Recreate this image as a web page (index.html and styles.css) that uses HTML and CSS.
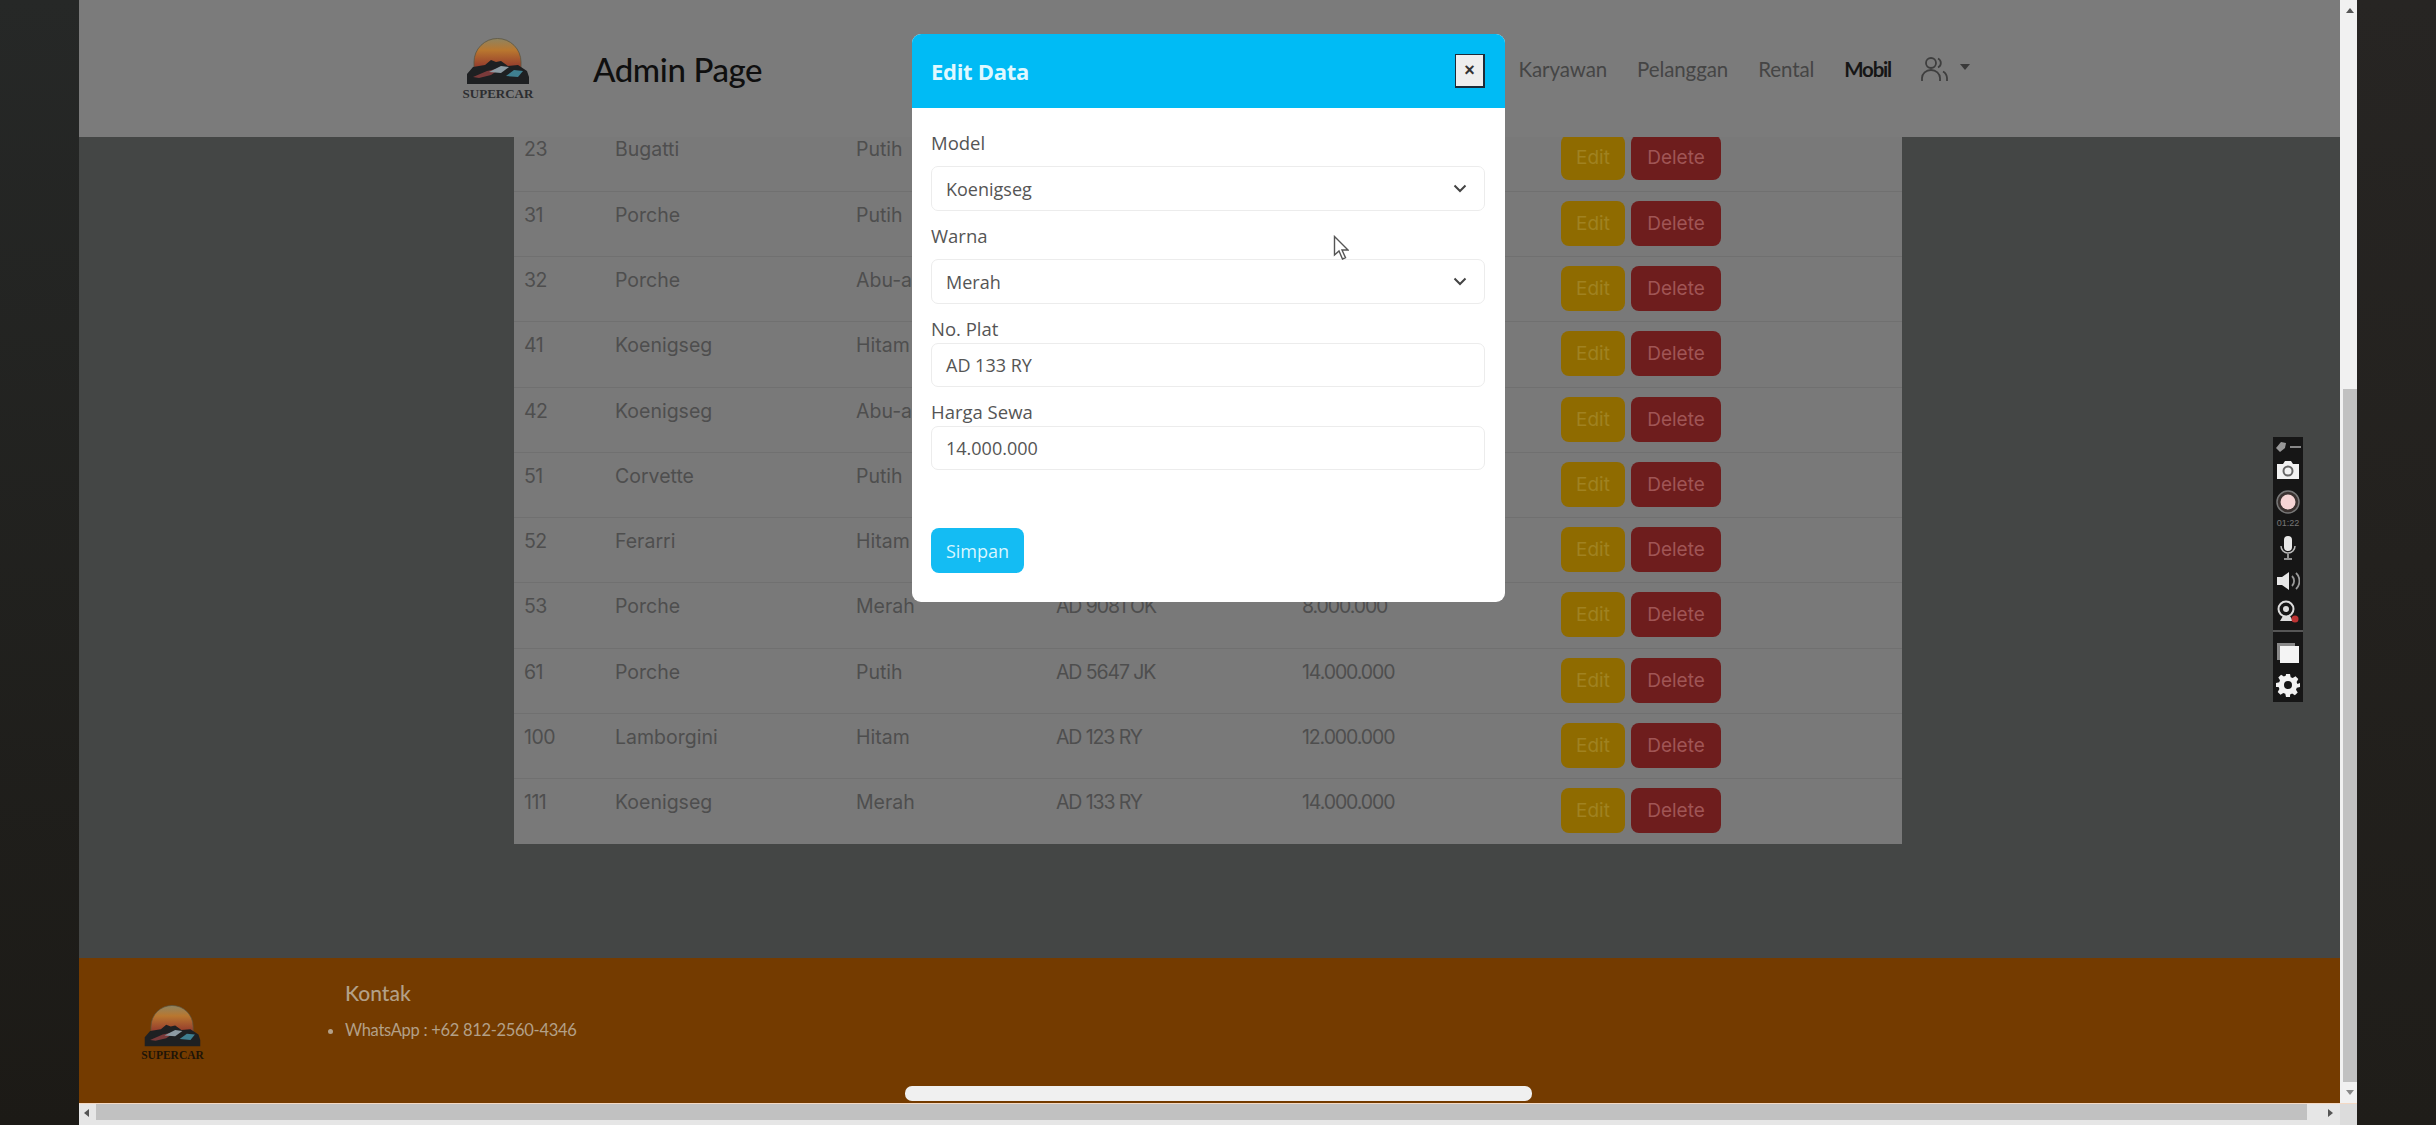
FILE: index.html
```html
<!DOCTYPE html>
<html lang="en">
<head>
  <meta charset="UTF-8" />
  <title>Admin Page</title>
  <link rel="stylesheet" href="styles.css">
</head>
<body>

<svg class="defs" width="0" height="0">
  <defs>
    <linearGradient id="sun" x1="0" y1="0" x2="0" y2="1">
      <stop offset="0" stop-color="#8f8460" />
      <stop offset="0.35" stop-color="#b9772f" />
      <stop offset="1" stop-color="#8a2a2c" />
    </linearGradient>
    <symbol id="logo-art" viewBox="0 0 70 48">
      <path d="M11 34V24a23.500 23.500 0 0 1 47 0v10z" fill="url(#sun)" stroke="#5c5540" stroke-width="0.8" />
      <path d="M4 46V36l6-7 12-2 6-5 5 2 5-1 7 5 10-1 9 6 2 6v7z" fill="#1e2022" />
      <path d="M10 39l14-6 14-3-10 7-12 3z" fill="#7a3a3a" />
      <path d="M26 34l12-6 8 1-8 6z" fill="#8d9ba3" />
      <path d="M43 38l8-6 9 1-5 6z" fill="#3f7f90" />
    </symbol>
  </defs>
</svg>

<div class="frame">
  <div class="side side-left"></div>

  <div class="browser">
    <div class="browser-top">
      <div class="page">
        <!-- Navbar -->
        <header class="navbar">
          <div class="brand">
            <svg class="brand-art"><use href="#logo-art" /></svg>
            <span class="brand-name">SUPERCAR</span>
          </div>
          <h1 class="page-title">Admin Page</h1>
          <nav class="nav-links">
            <a>Karyawan</a>
            <a>Pelanggan</a>
            <a>Rental</a>
            <a class="active">Mobil</a>
            <span class="user-menu">
              <svg width="27" height="26" viewBox="0 0 27 26" fill="none" stroke="#3e3e3e" stroke-width="1.800">
                <circle cx="10" cy="7" r="5" />
                <path d="M1 25v-3a9 8 0 0 1 18 0v3" />
                <path d="M17 2.500a5 5 0 0 1 0 9" />
                <path d="M22 15.500a8 8 0 0 1 4 6.500v3" />
              </svg>
              <i class="caret"></i>
            </span>
          </nav>
        </header>

        <!-- Table -->
        <main class="content">
          <table class="data-table">
            <colgroup>
              <col class="c-id"><col class="c-model"><col class="c-color"><col class="c-plate"><col class="c-price"><col>
            </colgroup>
            <tbody>
              <tr><td>23</td><td>Bugatti</td><td>Putih</td><td></td><td></td><td class="actions"><button class="btn-edit">Edit</button><button class="btn-delete">Delete</button></td></tr>
              <tr><td>31</td><td>Porche</td><td>Putih</td><td></td><td></td><td class="actions"><button class="btn-edit">Edit</button><button class="btn-delete">Delete</button></td></tr>
              <tr><td>32</td><td>Porche</td><td>Abu-abu</td><td></td><td></td><td class="actions"><button class="btn-edit">Edit</button><button class="btn-delete">Delete</button></td></tr>
              <tr><td>41</td><td>Koenigseg</td><td>Hitam</td><td></td><td></td><td class="actions"><button class="btn-edit">Edit</button><button class="btn-delete">Delete</button></td></tr>
              <tr><td>42</td><td>Koenigseg</td><td>Abu-abu</td><td></td><td></td><td class="actions"><button class="btn-edit">Edit</button><button class="btn-delete">Delete</button></td></tr>
              <tr><td>51</td><td>Corvette</td><td>Putih</td><td></td><td></td><td class="actions"><button class="btn-edit">Edit</button><button class="btn-delete">Delete</button></td></tr>
              <tr><td>52</td><td>Ferarri</td><td>Hitam</td><td></td><td></td><td class="actions"><button class="btn-edit">Edit</button><button class="btn-delete">Delete</button></td></tr>
              <tr><td>53</td><td>Porche</td><td>Merah</td><td>AD 9081 OK</td><td>8.000.000</td><td class="actions"><button class="btn-edit">Edit</button><button class="btn-delete">Delete</button></td></tr>
              <tr><td>61</td><td>Porche</td><td>Putih</td><td>AD 5647 JK</td><td>14.000.000</td><td class="actions"><button class="btn-edit">Edit</button><button class="btn-delete">Delete</button></td></tr>
              <tr><td>100</td><td>Lamborgini</td><td>Hitam</td><td>AD 123 RY</td><td>12.000.000</td><td class="actions"><button class="btn-edit">Edit</button><button class="btn-delete">Delete</button></td></tr>
              <tr><td>111</td><td>Koenigseg</td><td>Merah</td><td>AD 133 RY</td><td>14.000.000</td><td class="actions"><button class="btn-edit">Edit</button><button class="btn-delete">Delete</button></td></tr>
            </tbody>
          </table>
        </main>

        <!-- Footer -->
        <footer class="footer">
          <div class="brand brand-small">
            <svg class="brand-art"><use href="#logo-art" /></svg>
            <span class="brand-name">SUPERCAR</span>
          </div>
          <div class="contact">
            <h4>Kontak</h4>
            <ul>
              <li>WhatsApp : +62 812-2560-4346</li>
            </ul>
          </div>
        </footer>

        <!-- Edit modal -->
        <div class="modal">
          <div class="modal-head">
            <span class="modal-title">Edit Data</span>
            <button class="modal-close">×</button>
          </div>
          <form class="modal-body">
            <label>Model</label>
            <div class="field field-select">
              <span>Koenigseg</span>
              <svg width="14" height="9" viewBox="0 0 14 9" fill="none" stroke="#444" stroke-width="2"><path d="M1.500 1.500L7 7l5.500-5.500" /></svg>
            </div>
            <label>Warna</label>
            <div class="field field-select">
              <span>Merah</span>
              <svg width="14" height="9" viewBox="0 0 14 9" fill="none" stroke="#444" stroke-width="2"><path d="M1.500 1.500L7 7l5.500-5.500" /></svg>
            </div>
            <label class="label-tight">No. Plat</label>
            <div class="field field-input"><span>AD 133 RY</span></div>
            <label class="label-tight">Harga Sewa</label>
            <div class="field field-input"><span>14.000.000</span></div>
            <button class="btn-save" type="button">Simpan</button>
          </form>
        </div>

        <svg class="cursor" width="16" height="25" viewBox="0 0 16 25">
          <path d="M1.500 1.500V20l4.500-4 3.500 8 3-1.300-3.500-7.700H15z" fill="#fff" stroke="#555" stroke-width="1.400" />
        </svg>

        <!-- Screen recorder toolbar -->
        <div class="recorder">
          <div class="rec-top">
            <svg width="12" height="12" viewBox="0 0 12 12" fill="#999"><path d="M1 7l5-6 5 1-1 5-5 4z" /></svg>
            <i></i>
          </div>
          <svg class="rec-camera" width="24" height="20" viewBox="0 0 24 20">
            <path d="M1 4h6l2-3h6l2 3h6v15H1z" fill="#f2f2f2" />
            <circle cx="12" cy="11" r="4.500" fill="none" stroke="#666" stroke-width="2" />
          </svg>
          <svg class="rec-dot" width="24" height="24" viewBox="0 0 24 24">
            <circle cx="12" cy="12" r="11" fill="#3a3230" stroke="#777" stroke-width="1.500" />
            <circle cx="12" cy="12" r="7.500" fill="#f6d5d5" />
          </svg>
          <span class="rec-time">01:22</span>
          <svg class="rec-mic" width="18" height="24" viewBox="0 0 18 24" fill="none">
            <rect x="5" y="0" width="8" height="15" rx="4" fill="#e8e8e8" />
            <path d="M2 10a7 7 0 0 0 14 0M9 18v4M5 23h8" stroke="#bbb" stroke-width="1.500" />
          </svg>
          <svg class="rec-speaker" width="24" height="20" viewBox="0 0 24 20" fill="none">
            <path d="M1 6h5l7-5v18l-7-5H1z" fill="#e8e8e8" />
            <path d="M16 5a7 7 0 0 1 0 10M20 2a11 11 0 0 1 0 16" stroke="#999" stroke-width="1.800" />
          </svg>
          <svg class="rec-webcam" width="24" height="24" viewBox="0 0 24 24" fill="none">
            <circle cx="10" cy="9" r="7.500" stroke="#ddd" stroke-width="2" />
            <circle cx="10" cy="9" r="3" fill="#ddd" />
            <path d="M4 21h13l-3-5H7z" fill="#ddd" />
            <circle cx="19" cy="19" r="3.500" fill="#b33" />
          </svg>
          <i class="rec-line"></i>
          <svg class="rec-windows" width="24" height="22" viewBox="0 0 24 22">
            <path d="M1 1h18v3H4v14H1z" fill="#888" />
            <rect x="4" y="4" width="19" height="17" fill="#f4f4f4" />
          </svg>
          <svg class="rec-gear" width="24" height="24" viewBox="0 0 24 24">
            <path fill-rule="evenodd" fill="#f2f2f2" d="M10 1h4l.7 3.200 2 .8 2.800-1.700 2.800 2.800-1.700 2.800.8 2L24 10v4l-3.200.7-.8 2 1.700 2.800-2.800 2.800-2.800-1.700-2 .8L14 24h-4l-.7-3.200-2-.8-2.800 1.700-2.800-2.800 1.700-2.800-.8-2L0 14v-4l3.200-.7.8-2L2.300 4.500l2.800-2.800 2.800 1.700 2-.8zM12 8a4 4 0 1 0 0 8 4 4 0 0 0 0-8z" />
          </svg>
        </div>
      </div>

      <div class="vscroll">
        <span class="arrow arrow-up"></span>
        <div class="vscroll-thumb"></div>
        <span class="arrow arrow-down"></span>
      </div>
    </div>

    <div class="hscroll">
      <span class="arrow arrow-left"></span>
      <div class="hscroll-thumb"></div>
      <span class="arrow arrow-right"></span>
      <span class="hscroll-corner"></span>
    </div>
  </div>

  <div class="side side-right"></div>
</div>

<div class="home-bar"></div>

</body>
</html>
```

FILE: styles.css
```css
html, body {
  margin: 0;
  padding: 0;
  height: 100%;
  overflow: hidden;
  font-family: "Open Sans", sans-serif;
  background: #222;
}

.defs {
  position: absolute;
}

.frame {
  display: flex;
  width: 2436px;
  height: 1125px;
}

.side {
  width: 79px;
  flex: none;
}

.side-left {
  background: linear-gradient(#262827, #1c1a16);
}

.side-right {
  background: linear-gradient(#272523, #1f1d19);
}

.browser {
  flex: 1;
  display: flex;
  flex-direction: column;
  min-width: 0;
}

.browser-top {
  flex: 1;
  display: flex;
  min-height: 0;
}

.page {
  flex: 1;
  position: relative;
  display: flex;
  flex-direction: column;
  background: #444645;
  overflow: hidden;
}

/* navbar */
.navbar {
  height: 137px;
  flex: none;
  display: flex;
  align-items: center;
  padding: 0 370px 0 384px;
  background: #7b7b7b;
  position: relative;
  z-index: 1;
  box-sizing: border-box;
  font-family: Lato, sans-serif;
}

.brand {
  width: 70px;
  display: flex;
  flex-direction: column;
  align-items: center;
  margin-top: 1px;
}

.brand-art {
  width: 70px;
  height: 48px;
  display: block;
}

.brand-name {
  font-family: "Liberation Serif", serif;
  font-weight: bold;
  font-size: 13px;
  line-height: 15px;
  color: #2c2d30;
}

.page-title {
  margin: 0 0 0 60px;
  font-size: 33px;
  font-weight: 500;
  letter-spacing: -0.400px;
  color: #0f0f0f;
}

.nav-links {
  margin-left: auto;
  display: flex;
  align-items: center;
  gap: 30px;
  font-size: 20.500px;
  letter-spacing: -0.100px;
  color: #454545;
}

.nav-links .active {
  color: #161616;
  font-weight: bold;
  letter-spacing: -1.200px;
}

.user-menu {
  display: flex;
  align-items: center;
  gap: 12px;
}

.caret {
  width: 0;
  height: 0;
  border-left: 5px solid transparent;
  border-right: 5px solid transparent;
  border-top: 6px solid #3a3a3a;
  margin-bottom: 4px;
}

/* table */
.content {
  flex: 1;
  min-height: 0;
}

.data-table {
  width: 1388px;
  margin: -11px 0 0 435px;
  border-collapse: collapse;
  table-layout: fixed;
  background: #797979;
  font-family: Inter, sans-serif;
  font-size: 19.500px;
  color: #4e4e4e;
}

.c-id { width: 91px; }
.c-model { width: 241px; }
.c-color { width: 200px; }
.c-plate { width: 246px; }
.c-price { width: 259px; }

.data-table tr {
  height: 65.250px;
  border-bottom: 1px solid #707070;
}

.data-table tr:last-child {
  border-bottom: none;
}

.data-table td {
  vertical-align: top;
  padding: 9px 10px 0;
  line-height: 28px;
  white-space: nowrap;
}

.data-table td:nth-child(4),
.data-table td:nth-child(5) {
  letter-spacing: -1.100px;
}

.data-table td:first-child {
  letter-spacing: -0.500px;
}

.data-table td.actions {
  display: flex;
  gap: 6px;
}

.actions button {
  height: 45px;
  border: none;
  border-radius: 8px;
  padding: 0;
  font-family: Inter, sans-serif;
  font-size: 19px;
}

.btn-edit {
  width: 64px;
  background: #8f6b00;
  color: #a08220;
}

.btn-delete {
  width: 90px;
  background: #6e1d1d;
  color: #a05555;
}

/* footer */
.footer {
  height: 145px;
  flex: none;
  display: flex;
  background: #743b00;
  padding-left: 62px;
  box-sizing: border-box;
  font-family: Lato, sans-serif;
  color: #b3a088;
}

.brand-small {
  width: 63px;
  margin-top: 47px;
}

.brand-small .brand-art {
  width: 63px;
  height: 43px;
}

.brand-small .brand-name {
  font-size: 11.500px;
  line-height: 14px;
  color: #1e1408;
}

.contact {
  margin-left: 141px;
  padding-top: 20px;
}

.contact h4 {
  margin: 0;
  font-size: 21px;
  font-weight: 500;
  line-height: 30px;
}

.contact ul {
  margin: 9px 0 0;
  padding: 0;
  font-size: 16.500px;
  letter-spacing: -0.300px;
  line-height: 26px;
}

/* modal */
.modal {
  position: absolute;
  left: 833px;
  top: 34px;
  width: 593px;
  height: 568px;
  z-index: 2;
  background: #fff;
  border-radius: 9px;
  overflow: hidden;
}

.modal-head {
  height: 74px;
  display: flex;
  align-items: center;
  justify-content: space-between;
  padding: 0 20px 0 19px;
  background: #00bbf5;
}

.modal-title {
  font-size: 22px;
  font-weight: 700;
  letter-spacing: -0.300px;
  color: #dff8ff;
}

.modal-close {
  width: 30px;
  height: 34px;
  padding: 0;
  background: #eee;
  border: 1px solid #1d2b38;
  border-width: 1px 2px 2px 1px;
  font-size: 18px;
  font-weight: bold;
  color: #333;
}

.modal-body {
  display: flex;
  flex-direction: column;
  padding: 22px 20px 0 19px;
}

.modal-body label {
  font-size: 18.500px;
  line-height: 26px;
  color: #555;
  margin-bottom: 10px;
}

.modal-body .label-tight {
  margin-bottom: 1px;
}

.field {
  height: 45px;
  flex: none;
  display: flex;
  align-items: center;
  justify-content: space-between;
  padding: 0 17px 0 14px;
  border: 1px solid #ececec;
  border-radius: 7px;
  font-size: 18px;
  color: #555;
  margin-bottom: 12px;
  box-sizing: border-box;
}

.field-input {
  height: 44px;
}

.btn-save {
  width: 93px;
  height: 45px;
  margin-top: 46px;
  padding: 0;
  border: none;
  border-radius: 8px;
  background: #14bcf3;
  color: #d9f6ff;
  font-family: "Open Sans", sans-serif;
  font-size: 18px;
  font-weight: 500;
}

.cursor {
  position: absolute;
  left: 1254px;
  top: 235px;
  z-index: 3;
}

/* recorder */
.recorder {
  position: absolute;
  left: 2194px;
  top: 437px;
  width: 30px;
  height: 265px;
  z-index: 3;
  background: #161616;
  display: flex;
  flex-direction: column;
  align-items: center;
  padding-top: 4px;
  box-sizing: border-box;
}

.rec-top {
  display: flex;
  align-items: center;
  gap: 3px;
}

.rec-top i {
  width: 11px;
  height: 2px;
  background: #888;
}

.rec-camera { margin-top: 7px; }
.rec-dot { margin-top: 10px; }
.rec-mic { margin-top: 8px; }
.rec-speaker { margin-top: 11px; }
.rec-webcam { margin-top: 9px; }
.rec-windows { margin-top: 10px; }
.rec-gear { margin-top: 9px; }

.recorder svg {
  flex: none;
}

.rec-time {
  margin-top: 4px;
  font-size: 9px;
  line-height: 10px;
  color: #777;
  font-family: "Liberation Sans", sans-serif;
}

.rec-line {
  width: 100%;
  height: 2px;
  flex: none;
  background: #555;
  margin-top: 6px;
}

/* scrollbars */
.vscroll {
  width: 17px;
  flex: none;
  display: flex;
  flex-direction: column;
  align-items: center;
  background: #f1f1f1;
  box-sizing: border-box;
  padding-left: 3px;
}

.vscroll-thumb {
  margin-top: auto;
  height: 693px;
  width: 100%;
  background: #c1c1c1;
}

.hscroll {
  height: 22px;
  flex: none;
  display: flex;
  align-items: flex-start;
  background: #e6e6e6;
  border-top: 1px solid #f4d9c4;
  box-sizing: border-box;
}

.hscroll-thumb {
  width: 2211px;
  height: 16px;
  margin-left: 7px;
  background: #c1c1c1;
}

.hscroll-corner {
  width: 17px;
  height: 21px;
  margin-left: auto;
  background: #dcdcdc;
}

.arrow {
  width: 0;
  height: 0;
  flex: none;
}

.arrow-up {
  margin: 8px 0 6px;
  border-left: 4px solid transparent;
  border-right: 4px solid transparent;
  border-bottom: 5px solid #555;
}

.arrow-down {
  margin: 8px 0 8px;
  border-left: 4px solid transparent;
  border-right: 4px solid transparent;
  border-top: 5px solid #888;
}

.arrow-left {
  margin: 5px 0 0 5px;
  border-top: 4px solid transparent;
  border-bottom: 4px solid transparent;
  border-right: 5px solid #555;
}

.arrow-right {
  margin: 5px 0 0 21px;
  border-top: 4px solid transparent;
  border-bottom: 4px solid transparent;
  border-left: 5px solid #555;
}

.home-bar {
  position: absolute;
  left: 905px;
  top: 1086px;
  width: 627px;
  height: 15px;
  border-radius: 7px;
  background: #f0f0f0;
}
```
